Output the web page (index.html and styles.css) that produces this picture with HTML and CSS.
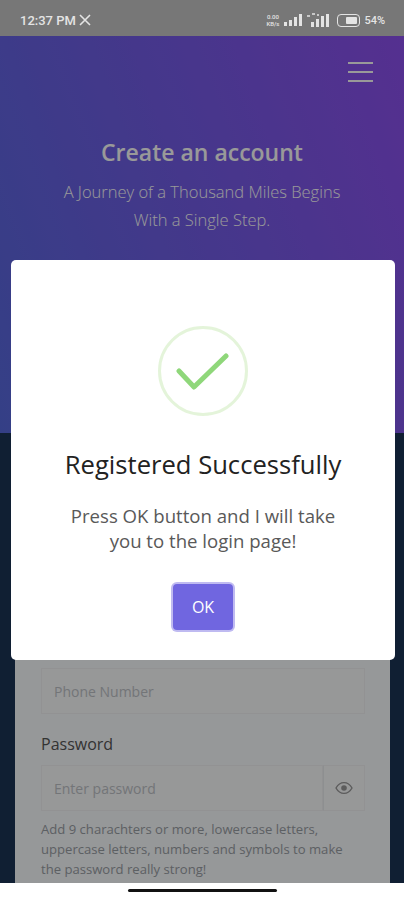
FILE: index.html
```html
<!DOCTYPE html>
<html lang="en">
<head>
    <title>Create an account</title>
    <link rel="stylesheet" href="styles.css">
</head>
<body>
<div class="status-bar">
    <div class="status-left">
        <span>12:37 PM</span>
        <svg class="x-logo" width="12" height="12" viewBox="0 0 12 12"><path d="M1 1l10 10M11 1L1 11" stroke="#e4e4e4" stroke-width="1.6" fill="none"/></svg>
    </div>
    <div class="status-right">
        <span class="net-speed">0.00<br>KB/s</span>
        <svg width="20" height="12" viewBox="0 0 20 12"><path d="M1 8h3v4H1zM6 6h3v6H6zM11 3h3v9h-3zM16 0h3v12h-3z" fill="#e4e4e4"/></svg>
        <svg width="24" height="14" viewBox="0 0 24 14"><path d="M4 9h3v5H4zM9 6h3v8H9zM14 3h3v11h-3zM19 1h3v13h-3z" fill="#e4e4e4"/><path d="M0 3h3M5 1h3M10 2h2" stroke="#e4e4e4" stroke-width="1.5"/></svg>
        <div class="battery"><div class="battery-level"></div></div>
        <span class="battery-text">54%</span>
    </div>
</div>

<div class="page">
    <div class="hero">
        <div class="hero-top">
            <button class="menu-button"><span></span><span></span><span></span></button>
        </div>
        <h1>Create an account</h1>
        <p>A Journey of a Thousand Miles Begins<br>With a Single Step.</p>
    </div>

    <div class="form-section">
        <form class="form-card">
            <input class="field" type="text" placeholder="Phone Number">
            <label class="field-label">Password</label>
            <div class="input-group">
                <input class="field" type="password" placeholder="Enter password">
                <button class="eye-button" type="button">
                    <svg width="18" height="14" viewBox="0 0 18 14"><path d="M1 7c2-3.600 4.800-5.400 8-5.400S15 3.400 17 7c-2 3.600-4.800 5.400-8 5.400S3 10.600 1 7z" fill="none" stroke="#999" stroke-width="1.400"/><circle cx="9" cy="7" r="2.800" fill="#999"/></svg>
                </button>
            </div>
            <div class="hint">Add 9 charachters or more, lowercase letters, uppercase letters, numbers and symbols to make the password really strong!</div>
        </form>
    </div>

    <div class="overlay">
        <div class="modal">
            <div class="success-icon">
                <svg width="54" height="40" viewBox="0 0 54 40"><path d="M3 20l15 16L50 5" fill="none" stroke="#8fd77a" stroke-width="5" stroke-linecap="round" stroke-linejoin="round"/></svg>
            </div>
            <h2>Registered Successfully</h2>
            <p>Press OK button and I will take you to the login page!</p>
            <button class="ok-button">OK</button>
        </div>
    </div>
</div>

<div class="nav-bar"><div class="nav-handle"></div></div>
</body>
</html>
```

FILE: styles.css
```css
* {
    box-sizing: border-box;
}

body {
    margin: 0;
    height: 900px;
    overflow: hidden;
    display: flex;
    flex-direction: column;
    font-family: "Open Sans", sans-serif;
    background-color: white;
}

.status-bar {
    height: 36px;
    flex-shrink: 0;
    padding: 4px 20px 0;
    display: flex;
    justify-content: space-between;
    align-items: center;
    background-color: #777;
    color: #e4e4e4;
    font-family: Roboto, sans-serif;
    font-size: 13px;
    font-weight: 500;
}

.status-left {
    display: flex;
    align-items: center;
    gap: 3px;
}

.status-right {
    display: flex;
    align-items: center;
    gap: 4px;
}

.net-speed {
    font-size: 6px;
    line-height: 7px;
    text-align: center;
}

.battery {
    width: 23px;
    height: 13px;
    margin-left: 2px;
    padding: 2px;
    border: 1.5px solid #e4e4e4;
    border-radius: 4px;
    display: flex;
    justify-content: flex-end;
}

.battery-level {
    width: 11px;
    background-color: #e4e4e4;
    border-radius: 1px;
}

.battery-text {
    font-size: 11px;
    margin-right: -1px;
}

.page {
    position: relative;
    flex-grow: 1;
    display: flex;
    flex-direction: column;
    min-height: 0;
}

.hero {
    height: 397px;
    flex-shrink: 0;
    background: linear-gradient(70deg, #586ae0, #8e50f0);
    color: white;
    text-align: center;
}

.hero-top {
    display: flex;
    justify-content: flex-end;
    padding: 26px 31px 0 0;
}

.menu-button {
    width: 25px;
    padding: 0;
    border: none;
    background: none;
    display: flex;
    flex-direction: column;
    gap: 7px;
}

.menu-button span {
    height: 2px;
    background-color: white;
}

.hero h1 {
    margin: 54px 0 0;
    font-size: 23px;
    line-height: 33px;
    font-weight: 600;
}

.hero p {
    margin: 9px 0 0;
    font-size: 16.500px;
    line-height: 28px;
    font-weight: 300;
}

.form-section {
    flex-grow: 1;
    min-height: 0;
    padding: 0 14px 0 15px;
    background-color: #1b3455;
}

.form-card {
    height: 100%;
    overflow: hidden;
    padding: 235px 25px 0 26px;
    background-color: #fbfdff;
}

.field {
    display: block;
    width: 100%;
    height: 46px;
    padding: 0 12px;
    border: 1px solid #f3f4f6;
    background-color: #fcfdfe;
    font-family: inherit;
    font-size: 14px;
}

.field::placeholder {
    color: #c0c4c8;
}

.field-label {
    display: block;
    margin: 19px 0 9px;
    font-size: 16px;
    line-height: 23px;
    color: #555;
}

.input-group {
    display: flex;
    height: 46px;
}

.input-group .field {
    flex-grow: 1;
    min-width: 0;
}

.eye-button {
    width: 42px;
    flex-shrink: 0;
    border: 1px solid #f3f4f6;
    border-left: 1px solid #eceef0;
    background-color: #fcfdfe;
    padding: 0;
    display: flex;
    align-items: center;
    justify-content: center;
}

.hint {
    margin-top: 8px;
    max-width: 310px;
    font-size: 13.100px;
    line-height: 20px;
    color: #9aa0a6;
}

.overlay {
    position: absolute;
    inset: 0;
    padding-left: 2px;
    display: flex;
    align-items: center;
    justify-content: center;
    background: rgba(0, 0, 0, .4);
}

.modal {
    width: 384px;
    height: 400px;
    padding-top: 66px;
    border-radius: 5px;
    background-color: white;
    text-align: center;
}

.success-icon {
    width: 90px;
    height: 90px;
    margin: 0 auto;
    border: 3px solid rgba(165, 220, 134, .3);
    border-radius: 50%;
    display: flex;
    align-items: center;
    justify-content: center;
}

.modal h2 {
    margin: 31px 0 0;
    font-size: 25.600px;
    line-height: 36px;
    font-weight: 400;
    color: #222;
}

.modal p {
    margin: 20px 52px 0;
    font-size: 18.600px;
    line-height: 25px;
    color: #595959;
}

.ok-button {
    width: 60px;
    height: 46px;
    margin-top: 31px;
    border: none;
    border-radius: 4px;
    background-color: #7066e0;
    box-shadow: 0 0 0 2px rgba(112, 102, 224, .45);
    color: white;
    font-family: inherit;
    font-size: 16px;
}

.nav-bar {
    height: 17px;
    flex-shrink: 0;
    display: flex;
    justify-content: center;
    padding-top: 6px;
    background-color: white;
}

.nav-handle {
    width: 149px;
    height: 3px;
    border-radius: 2px;
    background-color: #111;
}
```
